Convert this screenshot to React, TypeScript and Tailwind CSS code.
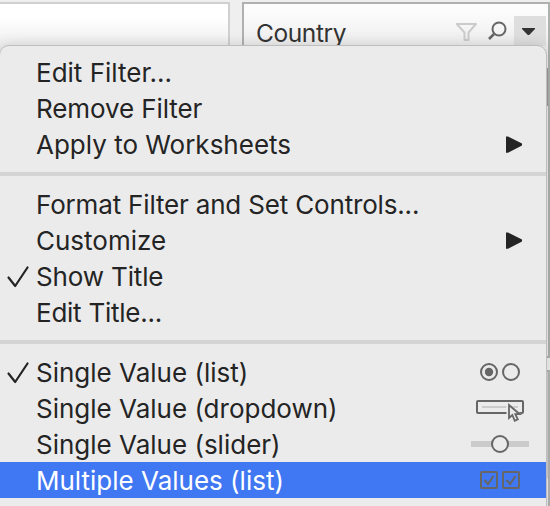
import React from "react";

type Row = { label: string; tracking?: string; icon?: React.ReactNode; checked?: boolean; active?: boolean };

const Arrow = () => (
  <svg width="60" height="36" className="block">
    <path d="M36 10.5H38L52 17.4V19.4L38 26.8H36Z" fill="#242424" />
  </svg>
);

const Radios = () => (
  <svg width="60" height="36" className="block" fill="none" stroke="#666" strokeWidth="2">
    <circle cx="19" cy="18" r="8" />
    <circle cx="19" cy="18" r="4.2" fill="#666" stroke="none" />
    <circle cx="41" cy="18" r="8" />
  </svg>
);

const Dropdown = () => (
  <svg width="60" height="36" className="block" fill="none" stroke="#666" strokeWidth="2">
    <path d="M12 17H48" stroke="#ccc" />
    <rect x="7" y="11" width="46" height="12" rx="1" />
    <path d="M38 15V29L42 27L45 32L49 29.5L47 25.5H50.5Z" fill="#ebebeb" stroke="#ebebeb" strokeWidth="3" />
    <path d="M39 15V28L42.3 25L44.8 30.8L47.8 29.4L45.3 24.2H49.7Z" fill="#ebebeb" strokeWidth="1.8" />
  </svg>
);

const Slider = () => (
  <svg width="60" height="36" className="block" fill="#ebebeb" stroke="#666" strokeWidth="2">
    <path d="M1 18H59" stroke="#cbcbcb" strokeWidth="6" />
    <circle cx="30" cy="18" r="8" />
  </svg>
);

const Checks = () => (
  <svg width="60" height="36" className="block" fill="none" stroke="#666" strokeWidth="2">
    <rect x="11" y="10" width="16" height="16" rx="1" />
    <path d="M14.5 18L18 22L23.5 14" />
    <rect x="33" y="10" width="16" height="16" rx="1" />
    <path d="M36.5 18L40 22L45.5 14" />
  </svg>
);

const groups: Row[][] = [
  [
    { label: "Edit Filter..." },
    { label: "Remove Filter", tracking: "tracking-[-0.1px]" },
    { label: "Apply to Worksheets", icon: <Arrow /> },
  ],
  [
    { label: "Format Filter and Set Controls...", tracking: "tracking-[-0.17px]" },
    { label: "Customize", icon: <Arrow /> },
    { label: "Show Title", tracking: "tracking-[-0.15px]", checked: true },
    { label: "Edit Title...", tracking: "tracking-[-0.25px]" },
  ],
  [
    { label: "Single Value (list)", checked: true, icon: <Radios /> },
    { label: "Single Value (dropdown)", icon: <Dropdown /> },
    { label: "Single Value (slider)", icon: <Slider /> },
    { label: "Multiple Values (list)", active: true, icon: <Checks /> },
  ],
];

function MenuRow({ row }: { row: Row }) {
  return (
    <div className={`flex h-9 items-center pr-4 ${row.active ? "bg-[#4077f2] text-white" : "text-[#242424]"}`}>
      <span className="w-9 shrink-0">
        {row.checked && (
          <svg width="36" height="36" className="block" fill="none" stroke="#242424" strokeWidth="2.2" strokeLinecap="round" strokeLinejoin="round">
            <path d="M8.5 19.5L15.2 28L27.5 9.5" />
          </svg>
        )}
      </span>
      <span className={`flex-1 pt-0.5 leading-[34px] whitespace-nowrap ${row.tracking ?? "tracking-normal"}`}>{row.label}</span>
      {row.icon}
    </div>
  );
}

export default function App() {
  return (
    <div className="relative h-[506px] w-[550px] overflow-hidden bg-[#efefef] font-['Inter',sans-serif] text-[26px]">
      <div className="flex h-[506px] gap-3 pt-0.5">
        <div className="w-[230px] border-t-2 border-r-2 border-[#d0d0d0] bg-linear-to-b from-white from-[14px] to-[#ededed] to-[44px]" />
        <div className="flex w-[308px] flex-col gap-3">
          <div className="flex h-[356px] items-start border-2 border-[#b0b0b0] bg-linear-to-b from-[#fcfcfc] from-[8px] to-[#ececec] to-[44px]">
            <span className="mt-[11px] ml-3 flex-1 text-[24.5px] leading-9 tracking-[-0.4px] text-[#333]">Country</span>
            <svg width="58" height="44" fill="none" strokeWidth="2">
              <path d="M0.7 20H20L12.5 28.5V36H8.5V28.5Z" stroke="#cbcbcb" strokeLinejoin="round" />
              <circle cx="43" cy="25" r="6.5" stroke="#666" />
              <path d="M38.3 29.8L33 35" stroke="#666" strokeWidth="2.6" />
            </svg>
            <div className="mt-3 flex h-[30px] w-8 bg-[#dedede]">
              <svg width="32" height="30"><path d="M8 12H21V13L15.2 19H13.8L8 13Z" fill="#333" /></svg>
            </div>
            <div className="mt-16 h-[38px] w-0.5 bg-[#999]" />
          </div>
          <div className="flex flex-1 justify-end border-t-2 border-r-2 border-[#b5b5b5]">
            <div className="h-[106px] w-0.5 bg-[#d0d0d0]" />
          </div>
        </div>
      </div>
      <div className="absolute top-[45px] left-[-1px] h-[480px] w-[548px] rounded-t-[10px] border border-[#bebebe] bg-[#ebebeb] pt-2 shadow-[0_0_14px_rgba(0,0,0,0.15)]">
        {groups.map((rows, i) => (
          <div key={i}>
            {i > 0 && <div className="my-2.5 h-1 bg-[#d4d4d4]" />}
            {rows.map((row) => <MenuRow key={row.label} row={row} />)}
          </div>
        ))}
      </div>
    </div>
  );
}
